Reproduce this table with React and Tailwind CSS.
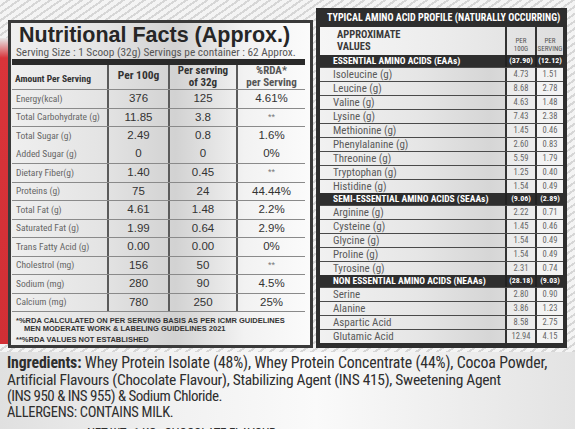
import React from "react";

const NARROW = "[font-family:'Roboto_Condensed','Liberation_Sans',sans-serif]";
const SANS = "[font-family:'Liberation_Sans',Arial,sans-serif]";

const nutrients = [
  { rows: [["Energy(kcal)", "376", "125", "4.61%"]] },
  { rows: [["Total Carbohydrate (g)", "11.85", "3.8", "**"]] },
  {
    rows: [
      ["Total Sugar (g)", "2.49", "0.8", "1.6%"],
      ["Added Sugar (g)", "0", "0", "0%"],
    ],
  },
  { rows: [["Dietary Fiber(g)", "1.40", "0.45", "**"]] },
  { rows: [["Proteins (g)", "75", "24", "44.44%"]] },
  { rows: [["Total Fat (g)", "4.61", "1.48", "2.2%"]] },
  { rows: [["Saturated Fat (g)", "1.99", "0.64", "2.9%"]] },
  { rows: [["Trans Fatty Acid (g)", "0.00", "0.00", "0%"]] },
  { rows: [["Cholestrol (mg)", "156", "50", "**"]] },
  { rows: [["Sodium (mg)", "280", "90", "4.5%"]] },
  { rows: [["Calcium (mg)", "780", "250", "25%"]] },
];

const amino = [
  { band: "ESSENTIAL AMINO ACIDS (EAAs)", total: ["(37.90)", "(12.12)"] },
  { name: "Isoleucine (g)", v: ["4.73", "1.51"] },
  { name: "Leucine (g)", v: ["8.68", "2.78"] },
  { name: "Valine (g)", v: ["4.63", "1.48"] },
  { name: "Lysine (g)", v: ["7.43", "2.38"] },
  { name: "Methionine (g)", v: ["1.45", "0.46"] },
  { name: "Phenylalanine (g)", v: ["2.60", "0.83"] },
  { name: "Threonine (g)", v: ["5.59", "1.79"] },
  { name: "Tryptophan (g)", v: ["1.25", "0.40"] },
  { name: "Histidine (g)", v: ["1.54", "0.49"] },
  { band: "SEMI-ESSENTIAL AMINO ACIDS (SEAAs)", total: ["(9.06)", "(2.89)"] },
  { name: "Arginine (g)", v: ["2.22", "0.71"] },
  { name: "Cysteine (g)", v: ["1.45", "0.46"] },
  { name: "Glycine (g)", v: ["1.54", "0.49"] },
  { name: "Proline (g)", v: ["1.54", "0.49"] },
  { name: "Tyrosine (g)", v: ["2.31", "0.74"] },
  { band: "NON ESSENTIAL AMINO ACIDS (NEAAs)", total: ["(28.18)", "(9.03)"] },
  { name: "Serine", v: ["2.80", "0.90"] },
  { name: "Alanine", v: ["3.86", "1.23"] },
  { name: "Aspartic Acid", v: ["8.58", "2.75"] },
  { name: "Glutamic Acid", v: ["12.94", "4.15"] },
];

function NutriGroup({ group }) {
  const tall = group.rows.length > 1;
  return (
    <div className={`flex border-b border-[#8a8a8a] ${tall ? "h-[37px]" : "h-[18.5px]"}`}>
      <div className={`w-[95px] flex flex-col justify-around pl-[4px] ${NARROW} text-[9.5px] text-[#666] whitespace-nowrap`}>
        {group.rows.map((r) => (
          <span key={r[0]}>{r[0]}</span>
        ))}
      </div>
      {[1, 2, 3].map((i) => (
        <div
          key={i}
          className={`${i === 1 ? "w-[61px]" : i === 2 ? "w-[68px]" : "w-[69px]"} border-l-2 border-[#5a5a5a] flex flex-col justify-around items-center ${SANS} text-[11.5px] text-[#333]`}
        >
          {group.rows.map((r) => (
            <span key={r[0]} className={r[i] === "**" ? "text-[9px] text-[#777]" : ""}>
              {r[i]}
            </span>
          ))}
        </div>
      ))}
    </div>
  );
}

function NutritionPanel() {
  return (
    <div className="w-[305px] h-[328px] mt-[20px] border-[3px] border-[#3a3a3a] bg-[linear-gradient(90deg,#efefef_0%,#e4e4e4_30%,#d2d2d2_55%,#f2f2f2_78%,#fbfbfb_100%)] pl-[1px] pr-[5px] flex flex-col">
      <h1 className={`${SANS} font-bold text-[21.5px] leading-[24px] text-[#262626] pl-[7px] whitespace-nowrap`}>
        Nutritional Facts (Approx.)
      </h1>
      <p className={`${NARROW} text-[11.3px] leading-[12px] text-[#555] pl-[4px] whitespace-nowrap`}>
        Serving Size : 1 Scoop (32g) Servings pe container : 62 Approx.
      </p>
      <div className="h-[6px] bg-[#2a2a2a]" />
      <div className="flex h-[25px] border-b border-[#8a8a8a]">
        <div className={`w-[95px] flex items-end pb-[3px] pl-[3px] ${NARROW} font-bold text-[9.5px] text-[#333] whitespace-nowrap`}>
          Amount Per Serving
        </div>
        <div className={`w-[61px] border-l-2 border-[#5a5a5a] flex justify-center pt-[2px] ${NARROW} font-bold text-[11.5px] text-[#333]`}>
          Per 100g
        </div>
        <div className={`w-[68px] border-l-2 border-[#5a5a5a] flex flex-col items-center justify-center ${NARROW} font-bold text-[11px] leading-[12.5px] text-[#333]`}>
          <span>Per serving</span>
          <span>of 32g</span>
        </div>
        <div className={`w-[69px] border-l-2 border-[#5a5a5a] flex flex-col items-center justify-center ${NARROW} font-bold text-[11px] leading-[12.5px] text-[#555]`}>
          <span>%RDA*</span>
          <span>per Serving</span>
        </div>
      </div>
      {nutrients.map((g, idx) => (
        <NutriGroup key={idx} group={g} />
      ))}
      <div className={`flex flex-col pt-[5px] pl-[4px] ${SANS} font-bold text-[7.5px] leading-[8px] text-[#333] whitespace-nowrap`}>
        <span>*%RDA CALCULATED ON PER SERVING BASIS AS PER ICMR GUIDELINES</span>
        <span className="pl-[8px]">MEN MODERATE WORK &amp; LABELING GUIDELINES 2021</span>
        <span className="mt-[3px]">**%RDA VALUES NOT ESTABLISHED</span>
      </div>
    </div>
  );
}

function AminoRow({ item }) {
  if (item.band) {
    return (
      <div className={`flex h-[12px] bg-[#2e2e2e] text-white ${NARROW} font-bold`}>
        <div className="w-[185px] pl-[13px] text-[9.5px] leading-[12px] whitespace-nowrap">{item.band}</div>
        <div className="w-[30px] border-l-2 border-[#222] text-center text-[8px] leading-[12px]">{item.total[0]}</div>
        <div className="w-[28px] border-l-2 border-[#222] text-center text-[8px] leading-[12px]">{item.total[1]}</div>
      </div>
    );
  }
  return (
    <div className="flex h-[14px] border-t border-[#4a4a4a] bg-[linear-gradient(90deg,#f1f1f1_0%,#e6e6e6_40%,#d6d6d6_70%,#e9e9e9_100%)]">
      <div className={`w-[185px] pl-[13px] ${NARROW} text-[11px] leading-[13px] text-[#5a5a5a]`}>{item.name}</div>
      <div className={`w-[30px] border-l-2 border-[#333] bg-[#ececec] text-center ${NARROW} text-[8.5px] leading-[13px] text-[#666]`}>
        {item.v[0]}
      </div>
      <div className={`w-[28px] border-l-2 border-[#333] bg-[#f3f3f3] text-center ${NARROW} text-[8.5px] leading-[13px] text-[#666]`}>
        {item.v[1]}
      </div>
    </div>
  );
}

function AminoPanel() {
  return (
    <div className="w-[251px] h-[340px] mt-[8px] bg-[#2e2e2e] px-[4px] pb-[5px] flex flex-col">
      <div className={`h-[19px] flex items-center pl-[7px] ${NARROW} font-bold text-[10px] text-white whitespace-nowrap`}>
        TYPICAL AMINO ACID PROFILE (NATURALLY OCCURRING)
      </div>
      <div className="flex h-[28px] bg-[linear-gradient(90deg,#f6f6f6_0%,#ececec_50%,#dedede_100%)]">
        <div className={`w-[185px] pl-[17px] pt-[2px] flex flex-col ${NARROW} font-bold text-[10.5px] leading-[12px] text-[#3a3a3a]`}>
          <span>APPROXIMATE</span>
          <span>VALUES</span>
        </div>
        <div className={`w-[30px] border-l-2 border-[#333] flex flex-col items-center justify-end pb-[2px] ${NARROW} text-[7px] leading-[8px] text-[#555]`}>
          <span>PER</span>
          <span>100G</span>
        </div>
        <div className={`w-[28px] border-l-2 border-[#333] flex flex-col items-center justify-end pb-[2px] ${NARROW} text-[7px] leading-[8px] text-[#555]`}>
          <span>PER</span>
          <span>SERVING</span>
        </div>
      </div>
      {amino.map((a, i) => (
        <AminoRow key={i} item={a} />
      ))}
    </div>
  );
}

export default function App() {
  return (
    <div className="w-[575px] h-[429px] overflow-hidden bg-[#e2e2e2]">
      <div className="flex items-start h-[352px] bg-[repeating-linear-gradient(145deg,#f4f4f4_0px,#f4f4f4_4px,#d6d6d6_4px,#d6d6d6_6px)]">
        <div className="w-[8px] mt-[38px] h-[306px] bg-[linear-gradient(180deg,#e8e8e8_0px,#d9343a_20px,#d12f35_100%)]" />
        <NutritionPanel />
        <div className="w-[3px]" />
        <AminoPanel />
      </div>
      <div className={`h-[77px] px-[7px] pt-[3px] bg-[linear-gradient(90deg,#e0e0e0_0%,#f1f1f1_30%,#fafafa_55%,#ededed_80%,#e3e3e3_100%)] ${NARROW} text-[15px] tracking-[-0.3px] leading-[16.5px] text-[#2e2e2e] whitespace-nowrap`}>
        <p className="text-[15.8px] tracking-[-0.15px]">
          <span className="font-bold">Ingredients:</span> Whey Protein Isolate (48%), Whey Protein Concentrate (44%), Cocoa Powder,
        </p>
        <p className="text-[15.5px]">Artificial Flavours (Chocolate Flavour), Stabilizing Agent (INS 415), Sweetening Agent</p>
        <p className="tracking-[-0.5px]">(INS 950 &amp; INS 955) &amp; Sodium Chloride.</p>
        <p className="text-[14.5px]">ALLERGENS: CONTAINS MILK.</p>
        <p className="pl-[80px] text-[13px] mt-[4px]">NET WT.: 1 KG - CHOCOLATE FLAVOUR</p>
      </div>
    </div>
  );
}
